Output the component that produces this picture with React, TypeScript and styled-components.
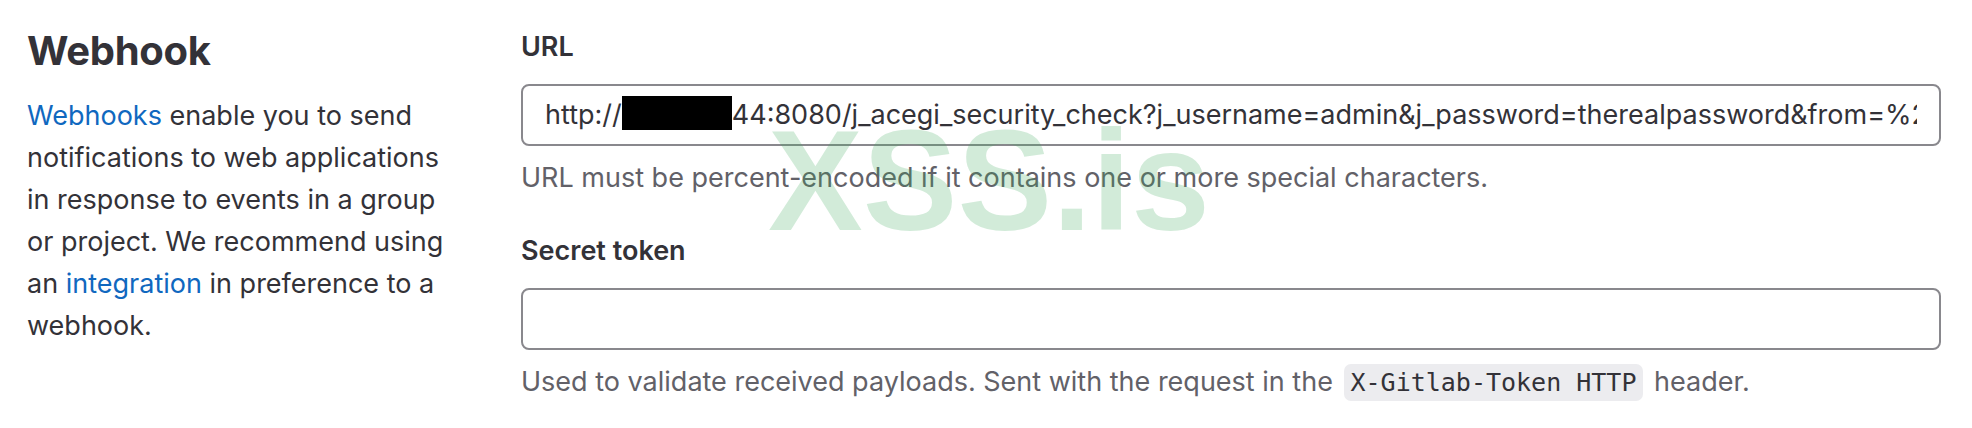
import React from "react";
import styled, { createGlobalStyle } from "styled-components";

const GlobalStyle = createGlobalStyle`
  html, body {
    margin: 0;
    padding: 0;
    background: #ffffff;
  }
  body {
    font-family: Inter, "Noto Sans", "Liberation Sans", sans-serif;
    color: #333238;
  }
`;

const Page = styled.div`
  position: relative;
  min-height: 428px;
  display: flex;
  padding: 27px 31px 0 27px;
  box-sizing: border-box;
  overflow: hidden;
`;

const Sidebar = styled.div`
  width: 432px;
  flex: none;
`;

const Heading = styled.h2`
  margin: 0;
  font-size: 40px;
  line-height: 48px;
  font-weight: 700;
  letter-spacing: -0.3px;
  color: #333238;
`;

const Description = styled.p`
  margin: 20px 0 0;
  font-size: 27px;
  line-height: 42px;
  color: #333238;
`;

const Link = styled.a`
  color: #1068bf;
  text-decoration: none;
`;

const Form = styled.div`
  flex: 1;
  min-width: 0;
  margin-left: 62px;
  display: flex;
  flex-direction: column;
`;

const FieldGroup = styled.div`
  display: flex;
  flex-direction: column;
  & + & {
    margin-top: 33px;
  }
`;

const Label = styled.label`
  font-size: 27px;
  line-height: 40px;
  font-weight: 600;
  color: #333238;
`;

const FieldBox = styled.div`
  margin-top: 17px;
  height: 62px;
  box-sizing: border-box;
  border: 2px solid #89888d;
  border-radius: 8px;
  padding: 0 22px;
  display: flex;
  align-items: center;
  background: #fff;
  min-width: 0;
`;

const FieldText = styled.span`
  flex: 1;
  min-width: 0;
  overflow: hidden;
  white-space: pre;
  font-size: 27px;
  line-height: 40px;
  color: #333238;
`;

const Redacted = styled.span`
  display: inline-block;
  width: 110px;
  height: 34px;
  background: #000;
  vertical-align: -6px;
`;

const Help = styled.p`
  margin: 12px 0 0;
  font-size: 27px;
  line-height: 40px;
  color: #626168;
`;

const Code = styled.code`
  font-family: "DejaVu Sans Mono", "Liberation Mono", monospace;
  font-size: 25px;
  color: #333238;
  background: #ececef;
  border-radius: 7px;
  padding: 4px 7px;
  margin: 0 3px;
`;

const Watermark = styled.div`
  position: absolute;
  left: 768px;
  top: 110px;
  font-family: "Liberation Sans", Arial, sans-serif;
  font-weight: 700;
  font-size: 142px;
  line-height: 1;
  color: rgba(60, 170, 90, 0.23);
  pointer-events: none;
  user-select: none;
`;

export default function App() {
  return (
    <>
      <GlobalStyle />
      <Page>
        <Sidebar>
          <Heading>Webhook</Heading>
          <Description>
            <Link href="#">Webhooks</Link> enable you to send notifications to
            web applications in response to events in a group or project. We
            recommend using an <Link href="#">integration</Link> in preference
            to a webhook.
          </Description>
        </Sidebar>
        <Form>
          <FieldGroup>
            <Label>URL</Label>
            <FieldBox>
              <FieldText>
                http://<Redacted />
                44:8080/j_acegi_security_check?j_username=admin&amp;j_password=therealpassword&amp;from=%2F
              </FieldText>
            </FieldBox>
            <Help>
              URL must be percent-encoded if it contains one or more special
              characters.
            </Help>
          </FieldGroup>
          <FieldGroup>
            <Label>Secret token</Label>
            <FieldBox>
              <FieldText />
            </FieldBox>
            <Help>
              Used to validate received payloads. Sent with the request in the{" "}
              <Code>X-Gitlab-Token HTTP</Code> header.
            </Help>
          </FieldGroup>
        </Form>
        <Watermark>XSS.is</Watermark>
      </Page>
    </>
  );
}
